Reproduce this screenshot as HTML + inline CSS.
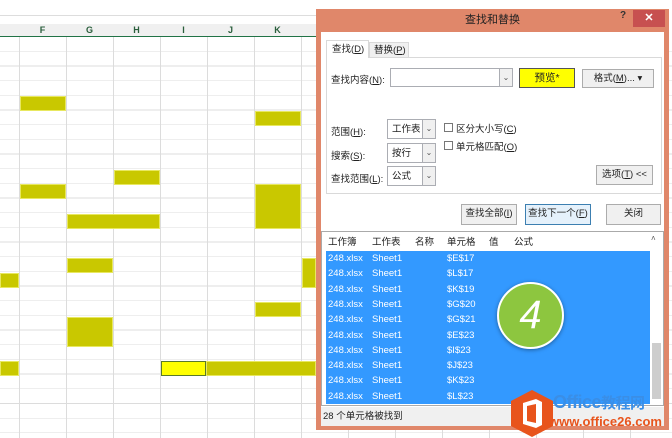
<!DOCTYPE html>
<html><head><meta charset="utf-8"><style>
*{margin:0;padding:0;box-sizing:border-box}
body{width:672px;height:438px;position:relative;overflow:hidden;background:#fff;font-family:"Liberation Sans","Noto Sans CJK SC",sans-serif;font-size:10px;color:#222}
.a{position:absolute}
.grid{left:0;top:37px;width:672px;height:401px;background:
repeating-linear-gradient(to bottom,transparent 0,transparent 14px,#dcdcdc 14px,#dcdcdc 14.67px),
repeating-linear-gradient(to right,transparent 0,transparent 19px,#dcdcdc 19px,#dcdcdc 20px,transparent 20px,transparent 47px);}
.hdr{left:0;top:24px;width:316px;height:13px;background:#f0f0f0;border-bottom:1px solid #217346}
.hdr span{position:absolute;top:1px;width:47px;text-align:center;color:#2a5e3c;font-size:9px;font-weight:bold}
.y{position:absolute;background:#c9c800;border:1px solid #e8e860}
.btn{position:absolute;background:#f0f0f0;border:1px solid #acacac;text-align:center;line-height:18px;font-size:9.5px}
.cb{position:absolute;background:#fff;border:1px solid #abadb3;font-size:9.5px;line-height:19px;padding-left:4px}
.cb i{position:absolute;right:0;top:0;width:13px;height:100%;border-left:1px solid #abadb3;background:#f0f0f0;font-style:normal;font-size:8px;line-height:17px;text-align:center;color:#555}
.lbl{position:absolute;font-size:9.5px}
.row{position:absolute;left:326px;width:324px;height:15.3px;color:#fff;font-size:9.5px;line-height:15px}
.row span{position:absolute}
</style></head><body>
<div class="a grid"></div>
<div class="a" style="left:0;top:15px;width:316px;height:1px;background:#ddd"></div>
<div class="a hdr"><span style="left:19px">F</span><span style="left:66px">G</span><span style="left:113px">H</span><span style="left:160px">I</span><span style="left:207px">J</span><span style="left:254px">K</span></div>
<div class="y" style="left:20px;top:96px;width:46px;height:15px"></div>
<div class="y" style="left:255px;top:111px;width:46px;height:15px"></div>
<div class="y" style="left:114px;top:170px;width:46px;height:15px"></div>
<div class="y" style="left:20px;top:184px;width:46px;height:15px"></div>
<div class="y" style="left:255px;top:184px;width:46px;height:45px"></div>
<div class="y" style="left:67px;top:214px;width:93px;height:15px"></div>
<div class="y" style="left:67px;top:258px;width:46px;height:15px"></div>
<div class="y" style="left:302px;top:258px;width:14px;height:30px"></div>
<div class="y" style="left:0;top:273px;width:19px;height:15px"></div>
<div class="y" style="left:255px;top:302px;width:46px;height:15px"></div>
<div class="y" style="left:67px;top:317px;width:46px;height:30px"></div>
<div class="y" style="left:0;top:361px;width:19px;height:15px"></div>
<div class="y" style="left:161px;top:361px;width:45px;height:15px;background:#ffff00;border:1px solid #5a7a2a"></div>
<div class="y" style="left:206px;top:361px;width:110px;height:15px"></div>

<div class="a" style="left:316px;top:9px;width:353px;height:421px;background:#e0876a"></div>
<div class="a" style="left:316px;top:9px;width:353px;height:23px;color:#222;font-size:11px;text-align:center;line-height:22px">查找和替换</div>
<div class="a" style="left:620px;top:10px;font-size:10px;font-weight:bold;color:#333">?</div>
<div class="a" style="left:633px;top:10px;width:32px;height:17px;background:#c75050;color:#fff;text-align:center;font-size:11px;line-height:17px;font-weight:bold">✕</div>
<div class="a" style="left:321px;top:32px;width:343px;height:394px;background:#fff"></div>
<div class="a" style="left:326px;top:57px;width:336px;height:137px;border:1px solid #d9d9d9;background:#fff"></div>
<div class="a" style="left:326px;top:40px;width:43px;height:18px;border:1px solid #d9d9d9;border-bottom:none;background:#fff;font-size:9.5px;line-height:17px;padding-left:5px">查找(<u>D</u>)</div>
<div class="a" style="left:369px;top:42px;width:40px;height:16px;border:1px solid #d9d9d9;background:#f0f0f0;font-size:9.5px;line-height:15px;padding-left:4px">替换(<u>P</u>)</div>
<div class="lbl" style="left:331px;top:72px">查找内容(<u>N</u>):</div>
<div class="cb" style="left:390px;top:68px;width:123px;height:19px"><i>⌄</i></div>
<div class="btn" style="left:519px;top:68px;width:56px;height:20px;background:#ffff00;border:1px solid #555;font-size:10.5px">预览*</div>
<div class="btn" style="left:582px;top:69px;width:72px;height:19px">格式(<u>M</u>)... ▾</div>
<div class="lbl" style="left:331px;top:124px">范围(<u>H</u>):</div>
<div class="lbl" style="left:331px;top:148px">搜索(<u>S</u>):</div>
<div class="lbl" style="left:331px;top:171px">查找范围(<u>L</u>):</div>
<div class="cb" style="left:387px;top:119px;width:49px;height:20px">工作表<i>⌄</i></div>
<div class="cb" style="left:387px;top:143px;width:49px;height:20px">按行<i>⌄</i></div>
<div class="cb" style="left:387px;top:166px;width:49px;height:20px">公式<i>⌄</i></div>
<div class="a" style="left:444px;top:123px;width:9px;height:9px;border:1px solid #777"></div>
<div class="lbl" style="left:456px;top:121px">区分大小写(<u>C</u>)</div>
<div class="a" style="left:444px;top:141px;width:9px;height:9px;border:1px solid #777"></div>
<div class="lbl" style="left:456px;top:139px">单元格匹配(<u>O</u>)</div>
<div class="btn" style="left:596px;top:165px;width:57px;height:20px">选项(<u>T</u>) &lt;&lt;</div>
<div class="btn" style="left:461px;top:204px;width:56px;height:21px">查找全部(<u>I</u>)</div>
<div class="btn" style="left:525px;top:204px;width:66px;height:21px;border-color:#3c7fb1;background:#e5f1fb">查找下一个(<u>F</u>)</div>
<div class="btn" style="left:606px;top:204px;width:55px;height:21px">关闭</div>
<div class="a" style="left:321px;top:231px;width:343px;height:175px;border:1px solid #aaa;background:#fff"></div>
<div class="a" style="left:326px;top:234px;font-size:9.5px;width:320px">
<span class="a" style="left:2px">工作簿</span><span class="a" style="left:46px">工作表</span><span class="a" style="left:89px">名称</span><span class="a" style="left:121px">单元格</span><span class="a" style="left:163px">值</span><span class="a" style="left:188px">公式</span></div>
<div class="a" style="left:651px;top:234px;font-size:8px;color:#555">˄</div>
<div class="a" style="left:326px;top:251px;width:324px;height:153px;background:#3399ff"></div>
<div class="a" style="left:652px;top:343px;width:9px;height:56px;background:#cdcdcd"></div>
<div class="row" style="top:251px"><span style="left:2px">248.xlsx</span><span style="left:46px">Sheet1</span><span style="left:121px">$E$17</span></div>
<div class="row" style="top:266.3px"><span style="left:2px">248.xlsx</span><span style="left:46px">Sheet1</span><span style="left:121px">$L$17</span></div>
<div class="row" style="top:281.6px"><span style="left:2px">248.xlsx</span><span style="left:46px">Sheet1</span><span style="left:121px">$K$19</span></div>
<div class="row" style="top:296.9px"><span style="left:2px">248.xlsx</span><span style="left:46px">Sheet1</span><span style="left:121px">$G$20</span></div>
<div class="row" style="top:312.2px"><span style="left:2px">248.xlsx</span><span style="left:46px">Sheet1</span><span style="left:121px">$G$21</span></div>
<div class="row" style="top:327.5px"><span style="left:2px">248.xlsx</span><span style="left:46px">Sheet1</span><span style="left:121px">$E$23</span></div>
<div class="row" style="top:342.8px"><span style="left:2px">248.xlsx</span><span style="left:46px">Sheet1</span><span style="left:121px">$I$23</span></div>
<div class="row" style="top:358.1px"><span style="left:2px">248.xlsx</span><span style="left:46px">Sheet1</span><span style="left:121px">$J$23</span></div>
<div class="row" style="top:373.4px"><span style="left:2px">248.xlsx</span><span style="left:46px">Sheet1</span><span style="left:121px">$K$23</span></div>
<div class="row" style="top:388.7px"><span style="left:2px">248.xlsx</span><span style="left:46px">Sheet1</span><span style="left:121px">$L$23</span></div>
<div class="a" style="left:497px;top:282px;width:67px;height:67px;border-radius:50%;background:#8dc63f;border:2px solid #fff;box-shadow:0 1px 4px rgba(0,0,0,.4);color:#fff;font-size:40px;text-align:center;line-height:62px;font-style:italic;font-weight:300">4</div>
<div class="a" style="left:321px;top:407px;width:343px;height:19px;background:#f0f0f0;font-size:9.5px;line-height:19px;padding-left:2px">28 个单元格被找到</div>
<svg class="a" style="left:509px;top:389px" width="46" height="49" viewBox="0 0 46 49"><polygon points="23,1 44,12 44,37 23,48 2,37 2,12" fill="#e8541c"/><path d="M14 14 L27 10 L33 13 L33 36 L27 39 L14 35 Z M18 17 V32 L27 34 V15 Z" fill="#fff" fill-rule="evenodd"/></svg>
<div class="a" style="left:553px;top:392px;font-size:18px;line-height:20px;font-weight:bold;color:#3a8ee6;letter-spacing:-0.5px;white-space:nowrap">Office<span style="font-size:15px">教程网</span></div>
<div class="a" style="left:549px;top:414px;font-size:13px;line-height:16px;font-weight:bold;color:#e8541c;white-space:nowrap">www.office26.com</div>
</body></html>
